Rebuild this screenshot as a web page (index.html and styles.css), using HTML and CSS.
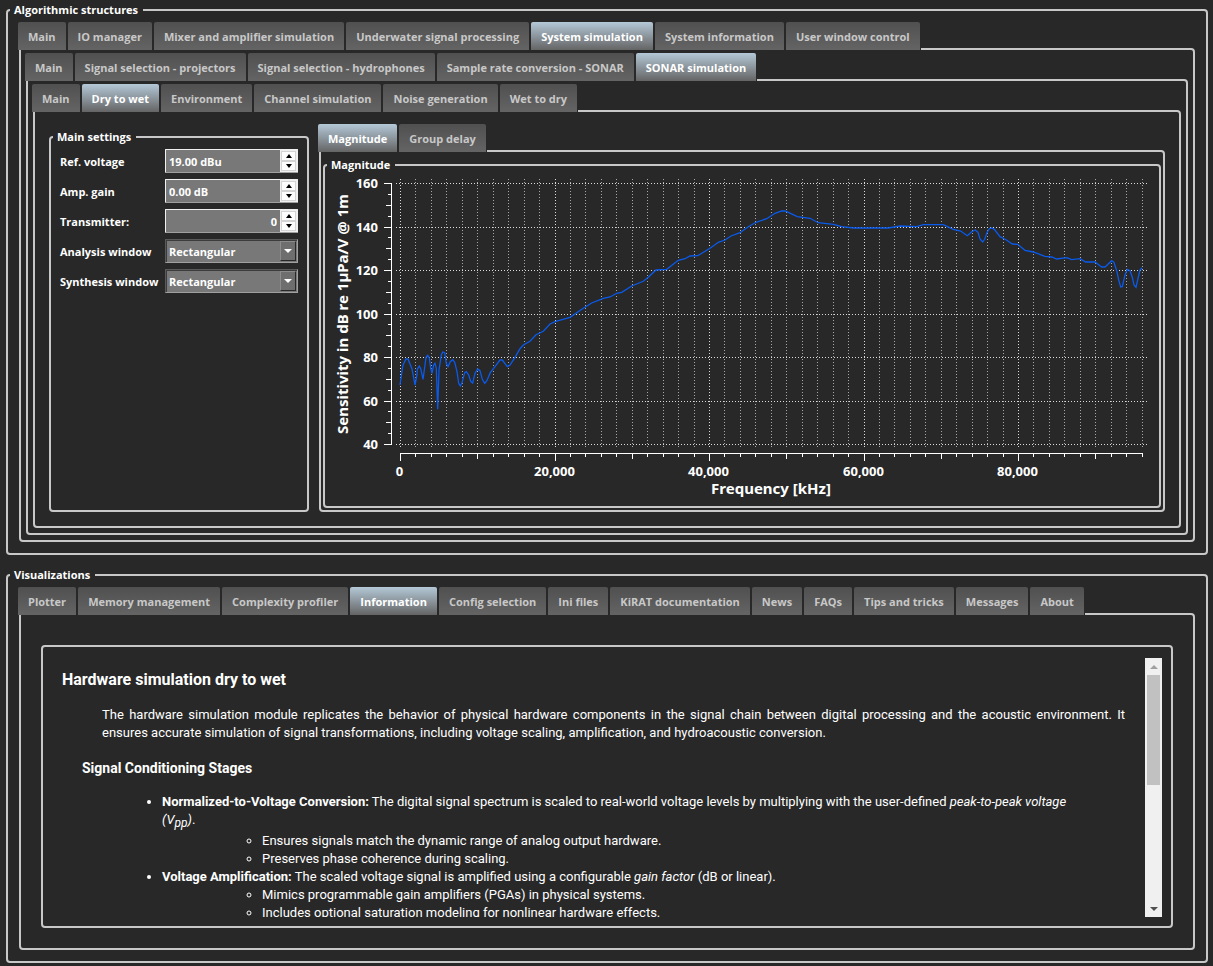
FILE: index.html
```
<!DOCTYPE html>
<html lang="en">
<head>
  <meta charset="UTF-8" />
  <meta name="viewport" content="width=device-width, initial-scale=1.0"/>
  <title>Algorithmic structures</title>
  <link rel="stylesheet" href="styles.css">
</head>

<body>
  <fieldset class="group">
    <legend>Algorithmic structures</legend>
    <div class="group-body outer">
      <div class="tabs">
        <button type="button">Main</button>
        <button type="button">IO manager</button>
        <button type="button">Mixer and amplifier simulation</button>
        <button type="button">Underwater signal processing</button>
        <button type="button" class="active">System simulation</button>
        <button type="button">System information</button>
        <button type="button">User window control</button>
      </div>
      <div class="pane nested">
        <div class="tabs">
          <button type="button">Main</button>
          <button type="button">Signal selection - projectors</button>
          <button type="button">Signal selection - hydrophones</button>
          <button type="button">Sample rate conversion - SONAR</button>
          <button type="button" class="active">SONAR simulation</button>
        </div>
        <div class="pane nested">
          <div class="tabs">
            <button type="button">Main</button>
            <button type="button" class="active">Dry to wet</button>
            <button type="button">Environment</button>
            <button type="button">Channel simulation</button>
            <button type="button">Noise generation</button>
            <button type="button">Wet to dry</button>
          </div>
          <div class="pane workspace">
            <fieldset class="group settings">
              <legend>Main settings</legend>
              <form class="settings-form">
                <label for="refVoltage">Ref. voltage</label>
                <div class="spin">
                  <input type="text" id="refVoltage" value="19.00 dBu" />
                  <div class="spin-buttons">
                    <button type="button" aria-label="Increase voltage"><svg viewBox="0 0 6 4"><path d="M0 4L3 0L6 4Z"/></svg></button>
                    <button type="button" aria-label="Decrease voltage"><svg viewBox="0 0 6 4"><path d="M0 0L3 4L6 0Z"/></svg></button>
                  </div>
                </div>

                <label for="ampGain">Amp. gain</label>
                <div class="spin">
                  <input type="text" id="ampGain" value="0.00 dB" />
                  <div class="spin-buttons">
                    <button type="button" aria-label="Increase gain"><svg viewBox="0 0 6 4"><path d="M0 4L3 0L6 4Z"/></svg></button>
                    <button type="button" aria-label="Decrease gain"><svg viewBox="0 0 6 4"><path d="M0 0L3 4L6 0Z"/></svg></button>
                  </div>
                </div>

                <label for="transmitter">Transmitter:</label>
                <div class="spin">
                  <input type="text" id="transmitter" class="number" value="0" />
                  <div class="spin-buttons">
                    <button type="button" aria-label="Next transmitter"><svg viewBox="0 0 6 4"><path d="M0 4L3 0L6 4Z"/></svg></button>
                    <button type="button" aria-label="Previous transmitter"><svg viewBox="0 0 6 4"><path d="M0 0L3 4L6 0Z"/></svg></button>
                  </div>
                </div>

                <label for="analysis">Analysis window</label>
                <div class="combo">
                  <select id="analysis">
                    <option selected>Rectangular</option>
                  </select>
                  <span class="combo-arrow"><svg viewBox="0 0 8 4"><path d="M0 0H8L4 4Z"/></svg></span>
                </div>

                <label for="synthesis">Synthesis window</label>
                <div class="combo">
                  <select id="synthesis">
                    <option selected>Rectangular</option>
                  </select>
                  <span class="combo-arrow"><svg viewBox="0 0 8 4"><path d="M0 0H8L4 4Z"/></svg></span>
                </div>
              </form>
            </fieldset>

            <div class="plot-area">
              <div class="tabs">
                <button type="button" class="active">Magnitude</button>
                <button type="button">Group delay</button>
              </div>
              <div class="pane plot-pane">
                <fieldset class="group">
                  <legend>Magnitude</legend>
                  <svg id="chart" class="chart" viewBox="0 0 830 331">
                    <g id="grid"></g>
                    <g id="axes"></g>
                    <polyline class="curve" points="73,210 76,190 79,184 81,184 85,194 88,210 90,200 90.3,194.3 92.3,191 93.7,193.7 96,204.3 98,190 99,182.3 100.7,180.3 102.3,183 103.7,193.3 105,198.3 106.7,190 108,188.3 109.3,193.3 110.7,234.3 112,195 114.3,180 115.7,177 117.7,177.7 119.3,188.3 121,191.7 123.3,186.7 125.7,184.7 127.7,187.3 130,196.7 131.7,208.3 133.3,211 135,207.7 137.7,197.7 139.3,196.7 141.7,200 143.7,206.3 145.7,208 148,198.3 150.7,194 153,195.7 155.3,204.3 157.7,208.3 159.7,206 163.3,197.7 168,191.7 173,185 175.3,185 180.3,191.7 183,190 188,182.3 193,173.7 196.3,170 203,166.3 209,159.7 216.3,156.3 223,149 228,146.7 243,142.3 256.3,133.3 264.7,128 276.3,123.3 283,122 289.7,118.3 294.7,117.3 304.7,111 316.3,106.3 321.3,102.3 329,95 339.7,94.3 351.3,85.3 358,83.7 363,81 370.7,80.7 383,73.3 391.3,67.3 398,65 404,61 413,57.7 421.3,51.7 429,47.3 439.7,43.7 448,38.3 454.7,36 458.3,36 464,38.7 470.3,41.7 483,43.3 491.3,47.7 506.3,49.3 514.7,51.7 526.3,53 561.3,53 573,51 589.7,51.7 596.3,49.7 616.3,49.7 626.3,54.3 633.7,56 640.3,60.7 644.7,56.7 648.3,55 651,57.3 653,64 655.7,67 657.7,64.3 659.7,58.3 662.3,53.7 664.7,53 667.3,54.3 673,61.7 679,64.7 685.3,69 690.7,69.3 698,75.3 706.3,77 718,81.3 724.7,82 729.7,84 739.7,82.7 744.7,84.7 753,83.7 758.7,87 768,87 774.7,92 778,92 784.7,85.7 787,87.3 789.7,95.7 791.7,105 793.7,112 795.3,111.7 798,100 800.3,94.3 803,95.7 805.3,102.3 807,110 809,112.3 811,103.3 813,95 815,92.7"/>
                    <text class="axis-title" x="444" y="319">Frequency [kHz]</text>
                    <text class="axis-title" transform="translate(21 139) rotate(-90)">Sensitivity in dB re 1µPa/V @ 1m</text>
                  </svg>
                </fieldset>
              </div>
            </div>
          </div>
        </div>
      </div>
    </div>
  </fieldset>

  <fieldset class="group visualizations">
    <legend>Visualizations</legend>
    <div class="group-body outer">
      <div class="tabs">
        <button type="button">Plotter</button>
        <button type="button">Memory management</button>
        <button type="button">Complexity profiler</button>
        <button type="button" class="active">Information</button>
        <button type="button">Config selection</button>
        <button type="button">Ini files</button>
        <button type="button">KiRAT documentation</button>
        <button type="button">News</button>
        <button type="button">FAQs</button>
        <button type="button">Tips and tricks</button>
        <button type="button">Messages</button>
        <button type="button">About</button>
      </div>
      <div class="pane info-pane">
        <div class="info-frame">
          <div class="info-text">
            <h2>Hardware simulation dry to wet</h2>
            <p>The hardware simulation module replicates the behavior of physical hardware components in the signal chain between digital processing and the acoustic environment. It ensures accurate simulation of signal transformations, including voltage scaling, amplification, and hydroacoustic conversion.</p>
            <h3>Signal Conditioning Stages</h3>
            <ul>
              <li><b>Normalized-to-Voltage Conversion:</b> The digital signal spectrum is scaled to real-world voltage levels by multiplying with the user-defined <i>peak-to-peak voltage<br>(V<sub>pp</sub>)</i>.
                <ul>
                  <li>Ensures signals match the dynamic range of analog output hardware.</li>
                  <li>Preserves phase coherence during scaling.</li>
                </ul>
              </li>
              <li><b>Voltage Amplification:</b> The scaled voltage signal is amplified using a configurable <i>gain factor</i> (dB or linear).
                <ul>
                  <li>Mimics programmable gain amplifiers (PGAs) in physical systems.</li>
                  <li>Includes optional saturation modeling for nonlinear hardware effects.</li>
                </ul>
              </li>
            </ul>
          </div>
          <div class="scrollbar">
            <button type="button" class="up" aria-label="Scroll up"><svg viewBox="0 0 8 4"><path d="M0 4L4 0L8 4Z"/></svg></button>
            <div class="track"><div class="thumb"></div></div>
            <button type="button" class="down" aria-label="Scroll down"><svg viewBox="0 0 8 4"><path d="M0 0L4 4L8 0Z"/></svg></button>
          </div>
        </div>
      </div>
    </div>
  </fieldset>

  <script src="chart.js"></script>
</body>
</html>
```
FILE: styles.css
```
* {
  box-sizing: border-box;
}

body {
  margin: 0;
  padding: 0 5px 3px 6px;
  height: 100vh;
  min-height: 860px;
  display: flex;
  flex-direction: column;
  gap: 10px;
  background: #282828;
  color: #fff;
  font-family: "Open Sans", sans-serif;
  font-size: 11px;
  font-weight: bold;
}

button,
input,
select {
  font: inherit;
  color: inherit;
}

/* Group boxes */
.group {
  display: flex;
  flex-direction: column;
  min-width: 0;
  margin: 0;
  padding: 0 2px;
  border: 2px solid #c8c8c8;
  border-radius: 4px;
}

.group legend {
  padding: 0 5px 0 4px;
  line-height: 20px;
}

.group-body {
  flex: 1;
  min-height: 0;
  display: flex;
  flex-direction: column;
}

.outer {
  padding: 2px 9px 11px;
}

.visualizations {
  flex: 1;
  min-height: 0;
}

/* Tabs */
.tabs {
  position: relative;
  z-index: 1;
  align-self: flex-start;
  display: flex;
  gap: 2px;
  margin: 0 0 -2px -1px;
  padding-right: 1px;
  background: #282828;
}

.tabs button {
  height: 28px;
  padding: 0 10px;
  border: none;
  border-radius: 2px 2px 0 0;
  background: linear-gradient(#505050, #646464);
  color: #c8c8c8;
  white-space: nowrap;
}

.tabs .active {
  background: linear-gradient(#b4c8d7, #646464);
  color: #fff;
}

.pane {
  flex: 1;
  min-height: 0;
  display: flex;
  flex-direction: column;
  border: 2px solid #c8c8c8;
  border-radius: 0 4px 4px 4px;
}

.nested {
  padding: 3px 5px 5px;
}

.workspace {
  flex-direction: row;
  gap: 10px;
  padding: 12px 14px 14px;
}

/* Settings */
.settings {
  width: 260px;
  margin-top: 3px;
}

.settings-form {
  display: grid;
  grid-template-columns: 99px minmax(0, 1fr);
  grid-auto-rows: 24px;
  gap: 6px;
  align-items: center;
  padding: 2px 7px;
}

.settings-form label {
  white-space: nowrap;
}

.spin {
  height: 24px;
  display: flex;
  border: 1px solid #f0f0f0;
  border-bottom-color: #a0a0a0;
  border-radius: 1px;
  background: #787878;
}

.spin input {
  flex: 1;
  min-width: 0;
  padding: 0 3px;
  border: none;
  background: none;
}

.spin .number {
  text-align: right;
}

.spin-buttons {
  width: 17px;
  display: flex;
  flex-direction: column;
  padding: 1px;
  background: #f0f0f0;
}

.spin-buttons button {
  flex: 1;
  display: flex;
  align-items: center;
  justify-content: center;
  padding: 0;
  border: 1px solid #d4d4d4;
  background: #fdfdfd;
}

.spin-buttons svg {
  width: 6px;
  height: 4px;
  fill: #000;
}

.combo {
  position: relative;
  height: 24px;
}

.combo select {
  width: 100%;
  height: 24px;
  padding: 0 20px 0 3px;
  appearance: none;
  border: 1px solid;
  border-color: #5a5a5a #a0a0a0 #a0a0a0 #5a5a5a;
  border-radius: 0;
  background: #787878;
  box-shadow: inset 1px 1px #3c3c3c;
}

.combo-arrow {
  position: absolute;
  top: 2px;
  right: 2px;
  bottom: 2px;
  width: 16px;
  display: flex;
  align-items: center;
  justify-content: center;
  border: 1px solid;
  border-color: #8c8c8c #282828 #282828 #8c8c8c;
  background: #6e6e6e;
  pointer-events: none;
}

.combo-arrow svg {
  width: 8px;
  height: 4px;
  fill: #fff;
}

/* Plot */
.plot-area {
  flex: 1;
  min-width: 0;
  display: flex;
  flex-direction: column;
}

.plot-pane {
  padding: 3px 2px 2px;
}

.chart {
  display: block;
  width: 100%;
  font-family: "Noto Sans", sans-serif;
  font-size: 13px;
  font-weight: bold;
  fill: #fff;
}

.chart line {
  stroke: #fff;
}

.chart .major,
.chart .minor {
  stroke-dasharray: 1 2;
}

.chart .major {
  stroke: #dcdcdc;
}

.chart .minor {
  stroke: #a8a8a8;
}

.curve {
  fill: none;
  stroke: #0a5aeb;
  stroke-width: 1.3;
}

.axis-title {
  font-size: 15px;
  text-anchor: middle;
}

/* Information */
.info-pane {
  padding: 30px 20px 20px;
}

.info-frame {
  flex: 1;
  min-height: 0;
  display: flex;
  padding: 11px 9px 9px 19px;
  border: 2px solid #c8c8c8;
  border-radius: 4px;
}

.info-text {
  flex: 1;
  overflow: hidden;
  padding: 11px 20px 0 0;
  font-family: Roboto, sans-serif;
  font-size: 13px;
  font-weight: normal;
  line-height: 18px;
}

.info-text h2 {
  margin: 0 0 15px;
  font-size: 16px;
  line-height: 22px;
}

.info-text h3 {
  margin: 17px 0 16px 20px;
  font-size: 14px;
  line-height: 18px;
}

.info-text p {
  margin: 0 0 0 40px;
  text-align: justify;
}

.info-text ul {
  margin: 0;
  padding-left: 100px;
}

.info-text sub {
  font-size: 12px;
  vertical-align: -3px;
}

.scrollbar {
  width: 17px;
  display: flex;
  flex-direction: column;
  background: #f0f0f0;
}

.scrollbar button {
  height: 17px;
  display: flex;
  align-items: center;
  justify-content: center;
  padding: 0;
  border: none;
  background: none;
}

.scrollbar svg {
  width: 8px;
  height: 4px;
  fill: #505050;
}

.scrollbar .up svg {
  fill: #a0a0a0;
}

.track {
  flex: 1;
  padding: 0 2px;
}

.thumb {
  height: 49%;
  background: #c1c1c1;
}
```
FILE: chart.js
```
const grid = document.getElementById("grid");
const axes = document.getElementById("axes");

function posX(freq) {
  return Math.round(73 + freq * 618 / 80000) + 0.5;
}

function posY(level) {
  return Math.round(8 + (160 - level) * 261 / 120) + 0.5;
}

function addLine(parent, x1, y1, x2, y2, cls) {
  const line = document.createElementNS("http://www.w3.org/2000/svg", "line");
  line.setAttribute("x1", x1);
  line.setAttribute("y1", y1);
  line.setAttribute("x2", x2);
  line.setAttribute("y2", y2);
  if (cls) line.setAttribute("class", cls);
  parent.appendChild(line);
}

function addLabel(x, y, anchor, value) {
  const text = document.createElementNS("http://www.w3.org/2000/svg", "text");
  text.setAttribute("x", x);
  text.setAttribute("y", y);
  text.setAttribute("text-anchor", anchor);
  text.textContent = value;
  axes.appendChild(text);
}

// Frequency axis, a tick every 2000
for (let f = 0; f <= 96000; f += 2000) {
  const x = posX(f);
  const major = f % 20000 === 0;
  const tick = major ? 8 : (f % 10000 === 0 ? 6 : 4);
  addLine(grid, x, 4, x, 272, major ? "major" : "minor");
  addLine(axes, x, 278, x, 278 + tick);
  if (major) addLabel(x - 1, 301, "middle", f.toLocaleString("en-US"));
}

// Level axis, a tick every 5 dB
for (let l = 40; l <= 160; l += 5) {
  const y = posY(l);
  const major = l % 20 === 0;
  const tick = major ? 8 : (l % 10 === 0 ? 6 : 4);
  if (major) addLine(grid, 69, y, 820, y, "major");
  addLine(axes, 65 - tick, y, 65, y);
  if (major) addLabel(51, y + 4, "end", l);
}

addLine(axes, posX(0), 278.5, posX(96000), 278.5);
addLine(axes, 64.5, posY(160), 64.5, posY(40));
```
